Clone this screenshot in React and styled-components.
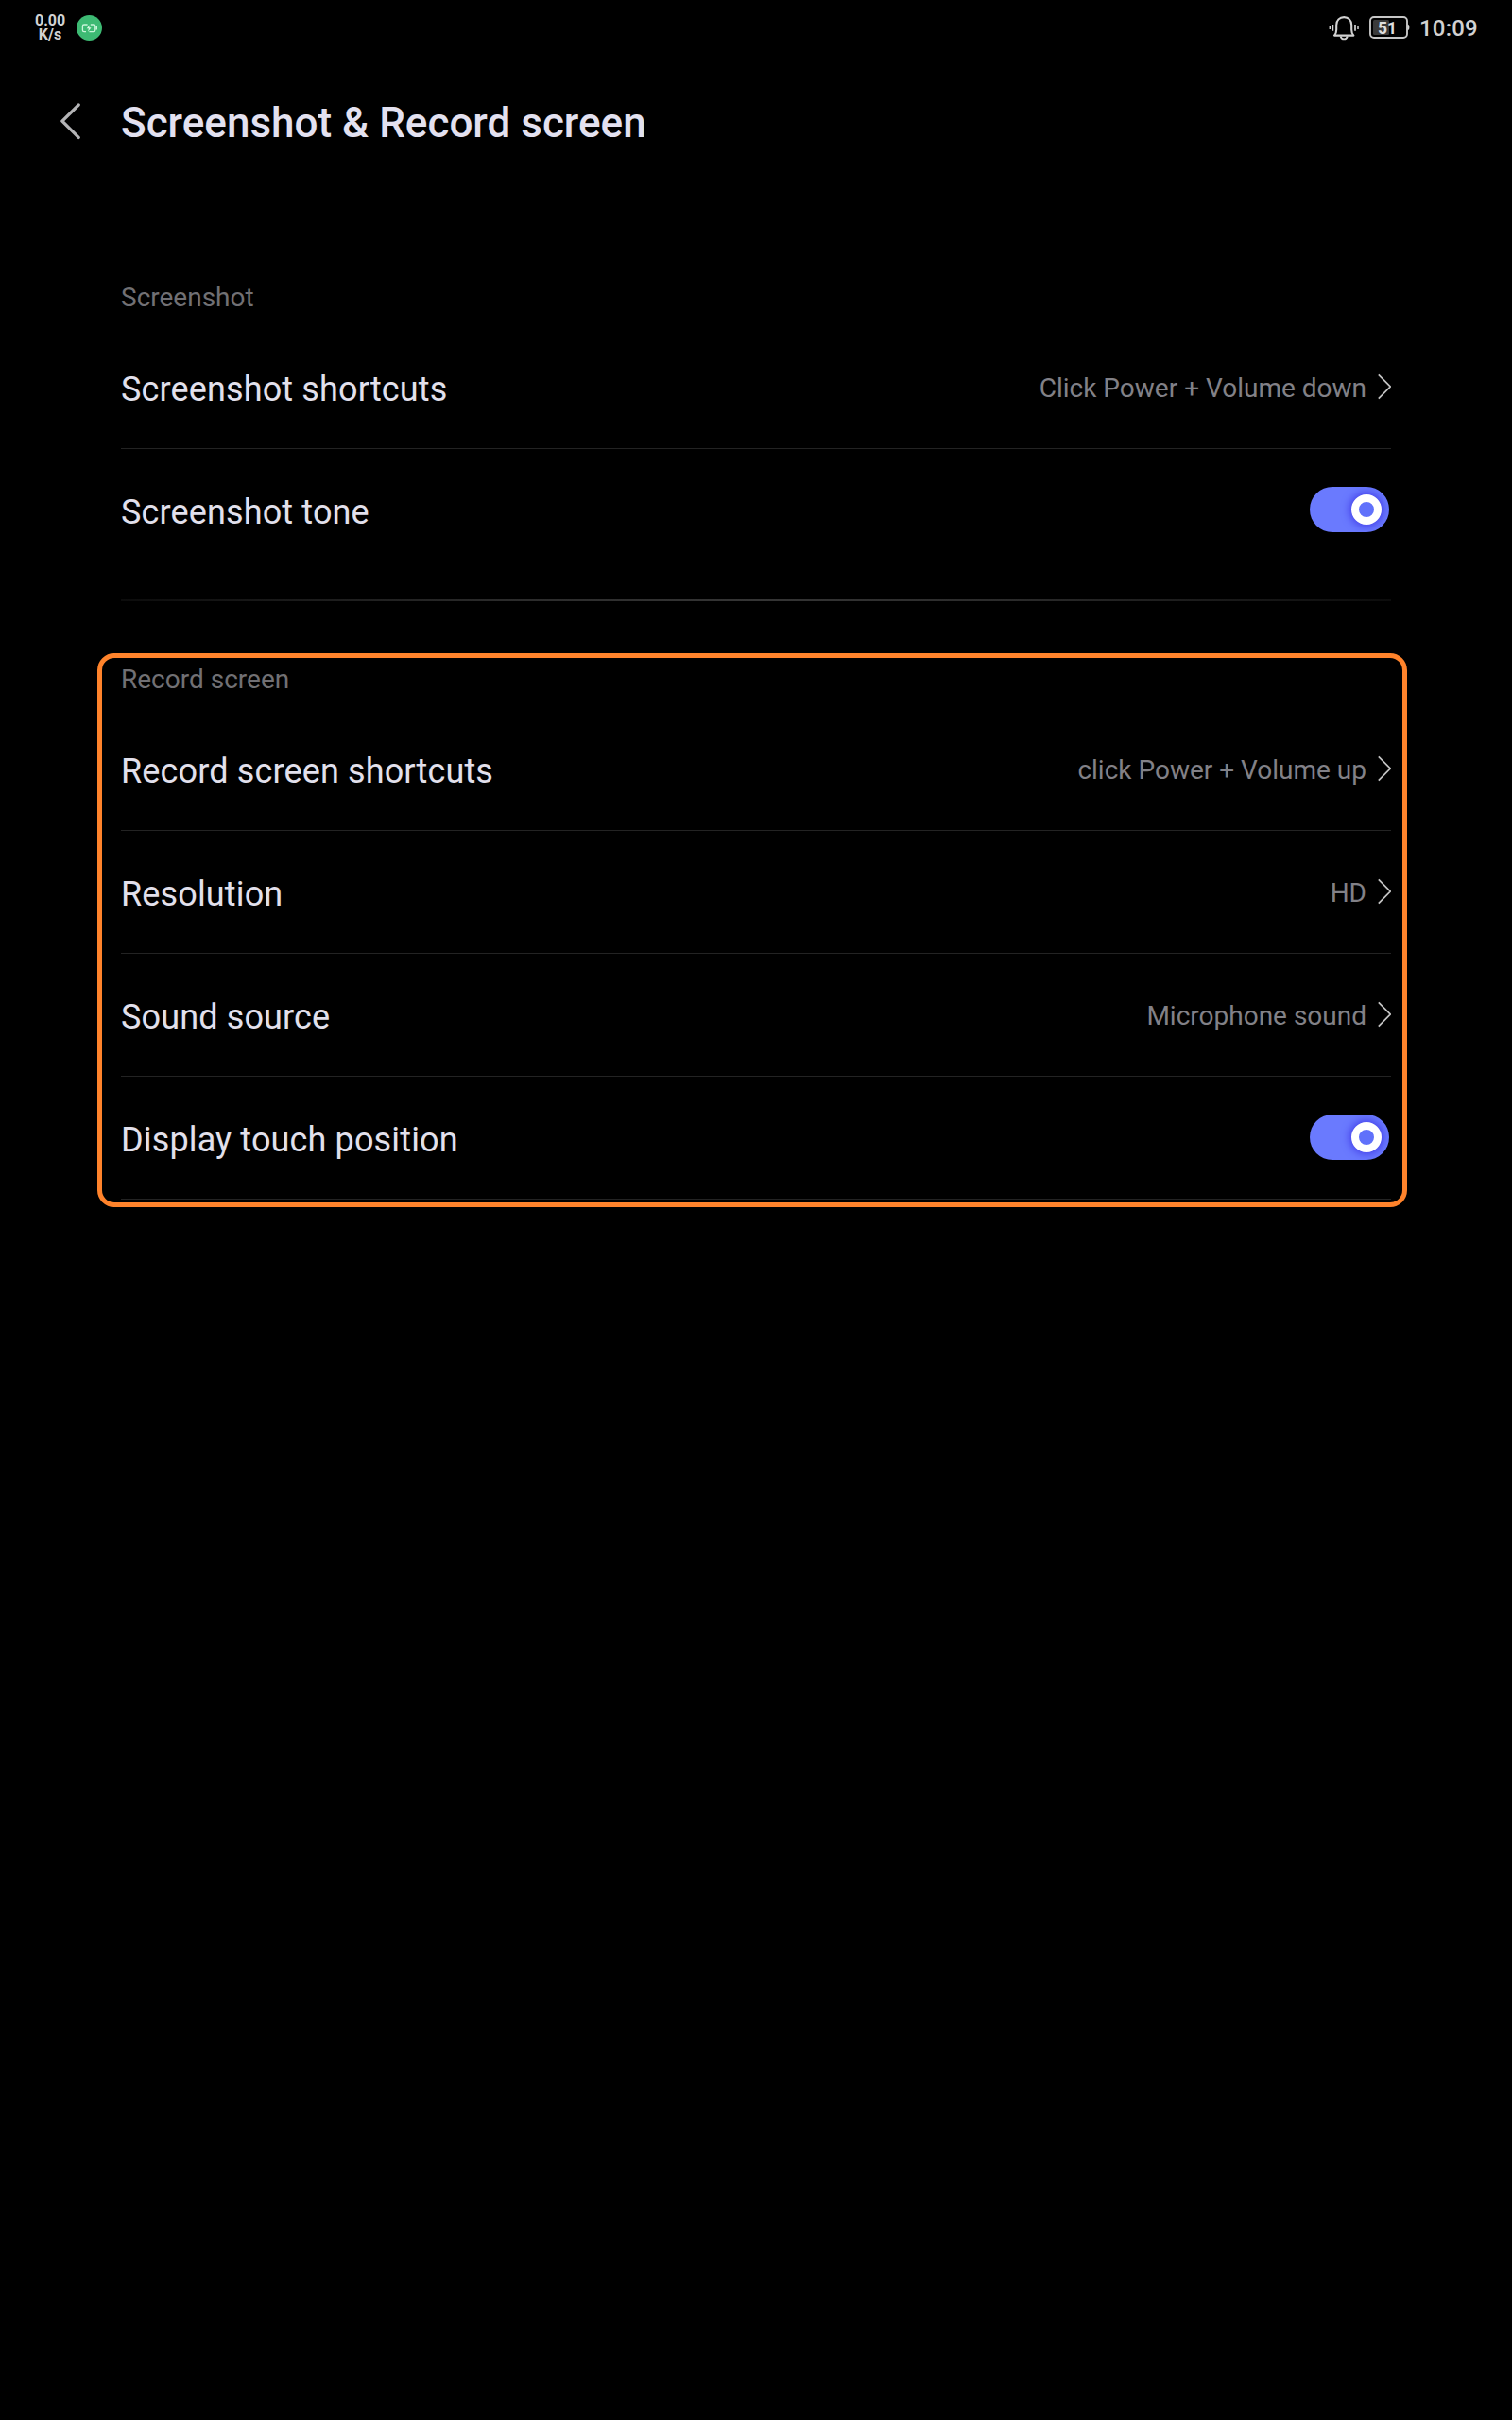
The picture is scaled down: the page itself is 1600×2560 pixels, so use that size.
import React from "react";
import styled, { createGlobalStyle } from "styled-components";

const GlobalStyle = createGlobalStyle`
  * { box-sizing: border-box; }
  html, body { margin: 0; padding: 0; background: #000; }
  body { font-family: Roboto, "Noto Sans", sans-serif; }
`;

const Screen = styled.div`
  width: 1600px;
  height: 2560px;
  background: #000;
  overflow: hidden;
  display: flex;
  flex-direction: column;
`;

const StatusBar = styled.header`
  height: 60px;
  display: flex;
  justify-content: space-between;
  align-items: center;
  padding: 0 37px;
  color: #d2d2d2;
`;

const StatusGroup = styled.div`
  display: flex;
  align-items: center;
`;

const NetworkGroup = styled(StatusGroup)`
  gap: 12px;
  margin-bottom: 2px;
`;

const StatusIcons = styled(StatusGroup)`
  gap: 11px;
  margin-right: 10px;
`;

const NetSpeed = styled.div`
  width: 32px;
  text-align: center;
  font-size: 16px;
  font-weight: 700;
  line-height: 15px;
  white-space: nowrap;
`;

const Clock = styled.time`
  width: 61px;
  font-size: 24px;
  font-weight: 500;
  letter-spacing: 0.2px;
  line-height: 28px;
  white-space: nowrap;
`;

const Icon = styled.svg`
  display: block;
  flex: none;
  margin-bottom: ${(p) => p.$lift || 0}px;
`;

const TitleBar = styled.div`
  height: 140px;
  padding-left: 64px;
  display: flex;
  align-items: center;
`;

const Title = styled.h1`
  margin: 0;
  font-size: 44px;
  line-height: 60px;
  font-weight: 500;
  color: #e3e1f0;
  white-space: nowrap;
`;

const Content = styled.main`
  padding: 87px 111px 0 103px;
`;

const Section = styled.section`
  border: 5px solid ${(p) => (p.$highlighted ? "#ff832b" : "transparent")};
  border-radius: 18px;
  padding: 0 12px 3px 20px;
`;

const Caption = styled.h2`
  margin: 0;
  height: 53px;
  padding-top: 6px;
  font-size: 28px;
  line-height: 33px;
  font-weight: 400;
  color: #717074;
`;

const Row = styled.div`
  height: 130px;
  display: flex;
  align-items: center;
  justify-content: space-between;
  border-bottom: 1px solid ${(p) => (p.$last ? "transparent" : "#232323")};
`;

const Label = styled.span`
  font-size: 36px;
  line-height: 42px;
  padding-top: 4px;
  letter-spacing: 0.14px;
  color: #e2e0ec;
  white-space: nowrap;
`;

const Value = styled.span`
  display: flex;
  align-items: center;
  gap: 12px;
  font-size: 28px;
  line-height: 33px;
  color: #828187;
  white-space: nowrap;
`;

const ValueText = styled.span`
  padding-top: 2px;
`;

const Switch = styled.span`
  width: 84px;
  height: 48px;
  margin: 0 2px 1px 0;
  padding-right: 8px;
  border-radius: 24px;
  background: #6a7afe;
  overflow: hidden;
  display: flex;
  align-items: center;
  justify-content: flex-end;
`;

const Knob = styled.span`
  width: 32px;
  height: 32px;
  border-radius: 50%;
  border: 8px solid #fff;
  background: #6071fb;
  box-shadow: 0 0 9px 2px #4440ea;
`;

const SectionDivider = styled.hr`
  height: 2px;
  margin: 21px 17px 55px 25px;
  border: 0;
  background: linear-gradient(90deg, #0c0c0c 0%, #2b2b2b 30%, #353535 50%, #2b2b2b 70%, #0c0c0c 100%);
`;

function BackIcon() {
  return (
    <Icon $lift={4} width="64" height="40" viewBox="0 0 64 40" fill="none">
      <path
        d="M19.2 3 L1.9 20.2 L19.2 37.4"
        stroke="#b4b4b6"
        strokeWidth="3.3"
        strokeLinecap="round"
        strokeLinejoin="round"
      />
    </Icon>
  );
}

function Chevron() {
  return (
    <Icon $lift={2} width="14" height="28" viewBox="0 0 14 28" fill="none">
      <path d="M0.8 1.3 L13.2 14 L0.8 26.7" stroke="#c4c4c4" strokeWidth="1.7" />
    </Icon>
  );
}

function ChargeBadge() {
  return (
    <Icon width="27" height="27" viewBox="0 0 27 27" fill="none">
      <circle cx="13.5" cy="13.5" r="13.5" fill="#3dba73" />
      <path
        d="M11.6 10H8a1.6 1.6 0 0 0-1.6 1.6V16A1.6 1.6 0 0 0 8 17.6h2M14.8 10h3.4a1.6 1.6 0 0 1 1.6 1.6V16a1.6 1.6 0 0 1-1.6 1.6h-4.8"
        stroke="#c9f5da"
        strokeWidth="1.3"
      />
      <path d="M21.2 12v3.6" stroke="#c9f5da" strokeWidth="1.6" />
      <path d="M13.9 10.2l-3.2 4.1h2.2l-.9 3.4 3.6-4.5h-2.3z" fill="#d9fae6" />
    </Icon>
  );
}

function BellIcon() {
  return (
    <Icon width="32" height="26" viewBox="0 0 32 26" fill="none" stroke="#d2d2d2">
      <path
        d="M6 20.6H26.4C24.9 19 24.2 17.4 24.2 14.5V9.4C24.2 4.4 20.8 1.1 16.2 1.1S8.2 4.4 8.2 9.4v5.1c0 2.9-.7 4.5-2.2 6.1z"
        strokeWidth="2.1"
        strokeLinejoin="round"
      />
      <path d="M12.6 21.4c.5 1.9 1.8 3 3.6 3s3.1-1.1 3.6-3" strokeWidth="1.9" />
      <path d="M4.4 9v6.8M28 9v6.8" strokeWidth="1.7" />
      <path d="M1.3 10.6v3.5M31 10.6v3.5" strokeWidth="1.5" />
    </Icon>
  );
}

function BatteryIcon() {
  return (
    <Icon $lift={2} width="43" height="24" viewBox="0 0 43 24" fill="none">
      <rect x="1" y="1" width="39" height="22" rx="4" stroke="#c6c6c6" strokeWidth="1.9" />
      <rect x="4" y="4" width="17" height="16" rx="1.5" fill="#3a3a3a" />
      <path d="M40.6 8.6c1.3.6 1.8 1.7 1.8 3.4s-.5 2.8-1.8 3.4z" fill="#d2d2d2" />
      <text
        x="19"
        y="18.6"
        textAnchor="middle"
        fontFamily="Roboto, sans-serif"
        fontSize="17.5"
        fontWeight="700"
        fill="#dedede"
      >
        51
      </text>
    </Icon>
  );
}

function LinkRow({ label, value, last }) {
  return (
    <Row $last={last}>
      <Label>{label}</Label>
      <Value>
        <ValueText>{value}</ValueText>
        <Chevron />
      </Value>
    </Row>
  );
}

function SwitchRow({ label, last }) {
  return (
    <Row $last={last}>
      <Label>{label}</Label>
      <Switch role="switch" aria-checked="true">
        <Knob />
      </Switch>
    </Row>
  );
}

export default function App() {
  return (
    <>
      <GlobalStyle />
      <Screen>
        <StatusBar>
          <NetworkGroup>
            <NetSpeed>
              0.00
              <br />
              K/s
            </NetSpeed>
            <ChargeBadge />
          </NetworkGroup>
          <StatusGroup>
            <StatusIcons>
              <BellIcon />
              <BatteryIcon />
            </StatusIcons>
            <Clock>10:09</Clock>
          </StatusGroup>
        </StatusBar>
        <TitleBar>
          <BackIcon />
          <Title>Screenshot &amp; Record screen</Title>
        </TitleBar>
        <Content>
          <Section>
            <Caption>Screenshot</Caption>
            <LinkRow label="Screenshot shortcuts" value="Click Power + Volume down" />
            <SwitchRow label="Screenshot tone" last />
          </Section>
          <SectionDivider />
          <Section $highlighted>
            <Caption>Record screen</Caption>
            <LinkRow label="Record screen shortcuts" value="click Power + Volume up" />
            <LinkRow label="Resolution" value="HD" />
            <LinkRow label="Sound source" value="Microphone sound" />
            <SwitchRow label="Display touch position" />
          </Section>
        </Content>
      </Screen>
    </>
  );
}
